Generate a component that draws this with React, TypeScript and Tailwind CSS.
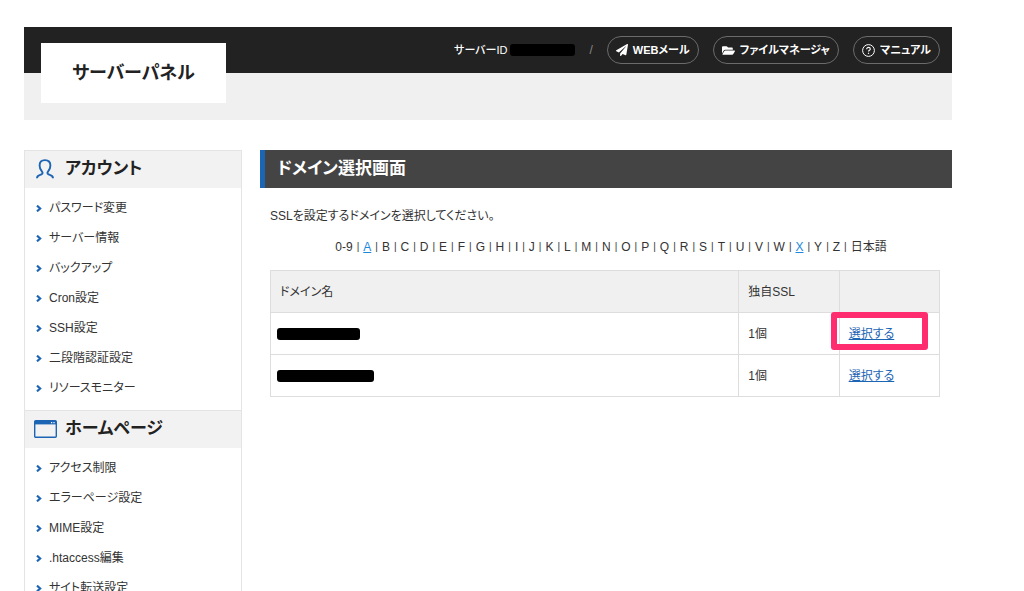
import { Fragment } from "react"
import type { ReactNode } from "react"
import { FaFolderOpen, FaPaperPlane } from "react-icons/fa"

const ACCOUNT_LINKS = ["パスワード変更", "サーバー情報", "バックアップ", "Cron設定", "SSH設定", "二段階認証設定", "リソースモニター"]
const HOMEPAGE_LINKS = ["アクセス制限", "エラーページ設定", "MIME設定", ".htaccess編集", "サイト転送設定"]

const INITIALS = ["0-9", ..."ABCDEFGHIJKLMNOPQRSTUVWXYZ", "日本語"]
const ACTIVE_INITIALS = ["A", "X"]

const DOMAINS = [
  { id: 1, mask: "w-[83px]", ssl: "1個", highlight: true },
  { id: 2, mask: "w-[97px]", ssl: "1個", highlight: false },
]

function UserIcon() {
  return (
    <svg width="18" height="20" viewBox="0 0 18 20" fill="none" stroke="#1c64b4" strokeWidth="1.9" aria-hidden="true">
      <path d="M1 19.2 C1 17 2.4 16.4 4.2 15.9 C6.6 15.2 7.2 14.2 6 12.6 C4.4 10.8 3.6 9 3.6 6.4 C3.6 3 5.7 1.1 9 1.1 C12.3 1.1 14.4 3 14.4 6.4 C14.4 9 13.6 10.8 12 12.6 C10.8 14.2 11.4 15.2 13.8 15.9 C15.6 16.4 17 17 17 19.2" />
    </svg>
  )
}

function WindowIcon() {
  return (
    <svg width="23" height="18" viewBox="0 0 23 18" fill="none" aria-hidden="true">
      <rect x="0.7" y="0.7" width="21.6" height="16.6" rx="1" stroke="#1c64b4" strokeWidth="1.4" />
      <path d="M1 1h21v3.4H1z" fill="#1c64b4" />
      <path d="M17 2h1.2v1.2H17zM19.4 2h1.2v1.2h-1.2z" fill="#fff" />
    </svg>
  )
}

function HelpIcon() {
  return (
    <svg width="13" height="13" viewBox="0 0 13 13" fill="none" stroke="#fff" aria-hidden="true">
      <circle cx="6.5" cy="6.5" r="5.9" strokeWidth="1" />
      <path d="M4.7 5.2c0-1.2.8-1.8 1.8-1.8s1.8.6 1.8 1.6c0 1.3-1.8 1.3-1.8 2.6" strokeWidth="1.1" />
      <path d="M6.5 8.7v1.2" strokeWidth="1.2" />
    </svg>
  )
}

function Chevron() {
  return (
    <svg width="6" height="7" viewBox="0 0 6 7" fill="none" stroke="#1c64b4" strokeWidth="2.1" aria-hidden="true">
      <path d="M1 0.6 4.2 3.5 1 6.4" />
    </svg>
  )
}

function HeaderLink({ icon, children }: { icon: ReactNode; children: ReactNode }) {
  return (
    <a href="#" className="flex h-7 items-center gap-[5px] rounded-full border border-[#6b6b6b] px-2 font-semibold text-white">
      {icon}
      {children}
    </a>
  )
}

function MenuSection({ icon, title, links }: { icon: ReactNode; title: string; links: string[] }) {
  return (
    <section>
      <h2 className="flex h-[38px] items-center gap-2 border-t border-[#e4e4e4] bg-[#f2f2f2] pb-0.5 pl-2 text-[17px] font-bold text-[#222]">
        <span className="flex w-6 justify-center">{icon}</span>
        {title}
      </h2>
      <ul className="pt-[5px] pb-[7px]">
        {links.map(l => (
          <li key={l}>
            <a href="#" className="flex h-[30px] items-center gap-[7px] pl-[11px]">
              <Chevron />
              {l}
            </a>
          </li>
        ))}
      </ul>
    </section>
  )
}

export default function App() {
  return (
    <div className="h-screen overflow-hidden bg-white pt-[27px] pr-[72px] pl-6 font-['Liberation_Sans','Noto_Sans_CJK_JP',sans-serif] text-[12px] leading-[18px] text-[#333] [font-feature-settings:'palt']">
      {/* Header */}
      <header className="flex h-[93px] items-start justify-between bg-[linear-gradient(#222_46px,#f0f0f0_46px)] pr-3 pl-[17px]">
        <h1 className="mt-4 flex h-[60px] w-[185px] items-center justify-center bg-white text-[18px] font-bold text-[#222]">
          サーバーパネル
        </h1>
        <div className="flex h-[46px] items-center text-[11px] text-white">
          <span className="font-medium">サーバーID</span>
          <span className="ml-[3px] h-3 w-[65px] rounded-[3px] bg-black" />
          <span className="mx-[14px] text-[12px] text-[#888]">/</span>
          <nav className="flex gap-[14px]">
            <HeaderLink icon={<FaPaperPlane size={12} />}>WEBメール</HeaderLink>
            <HeaderLink icon={<FaFolderOpen size={13} />}>ファイルマネージャ</HeaderLink>
            <HeaderLink icon={<HelpIcon />}>マニュアル</HeaderLink>
          </nav>
        </div>
      </header>

      <div className="mt-[30px] flex items-start gap-[18px]">
        {/* Sidebar */}
        <aside className="w-[218px] shrink-0 border-x border-[#e4e4e4]">
          <MenuSection icon={<UserIcon />} title="アカウント" links={ACCOUNT_LINKS} />
          <MenuSection icon={<WindowIcon />} title="ホームページ" links={HOMEPAGE_LINKS} />
        </aside>

        {/* Content */}
        <main className="min-w-0 flex-1">
          <h2 className="flex h-[38px] items-center border-l-[5px] border-[#1c64b4] bg-[#444] pl-3 text-[17px] font-bold text-white">
            ドメイン選択画面
          </h2>
          <div className="pr-3 pl-[10px]">
            <p className="mt-[19px]">SSLを設定するドメインを選択してください。</p>
            <div className="mt-[13px] flex items-center justify-center gap-1 pl-3">
              {INITIALS.map((s, i) => (
                <Fragment key={s}>
                  {i > 0 && <span className="text-[10px]">|</span>}
                  {ACTIVE_INITIALS.includes(s) ? <a href="#" className="text-[#1e88dd] underline">{s}</a> : <span>{s}</span>}
                </Fragment>
              ))}
            </div>
            <table className="mt-[14px] w-full table-fixed border-collapse">
              <thead>
                <tr className="h-[42px] bg-[#f0f0f0] text-left">
                  <th className="w-[70%] border border-[#ddd] px-[9px] font-normal">ドメイン名</th>
                  <th className="w-[15%] border border-[#ddd] px-[9px] font-normal">独自SSL</th>
                  <th className="w-[15%] border border-[#ddd] px-[9px]" />
                </tr>
              </thead>
              <tbody>
                {DOMAINS.map(d => (
                  <tr key={d.id} className="h-[42px]">
                    <td className="border border-[#ddd] px-[6px]">
                      <div className={`h-3 rounded-[3px] bg-black ${d.mask}`} />
                    </td>
                    <td className="border border-[#ddd] px-[9px]">{d.ssl}</td>
                    <td className="relative border border-[#ddd] px-[9px]">
                      <a href="#" className="text-[#1c64b4] underline">選択する</a>
                      {d.highlight && (
                        <span className="pointer-events-none absolute -top-px right-[11px] bottom-1 -left-[9px] rounded-[3px] border-[6px] border-[#ff2d6f]" />
                      )}
                    </td>
                  </tr>
                ))}
              </tbody>
            </table>
          </div>
        </main>
      </div>
    </div>
  )
}
